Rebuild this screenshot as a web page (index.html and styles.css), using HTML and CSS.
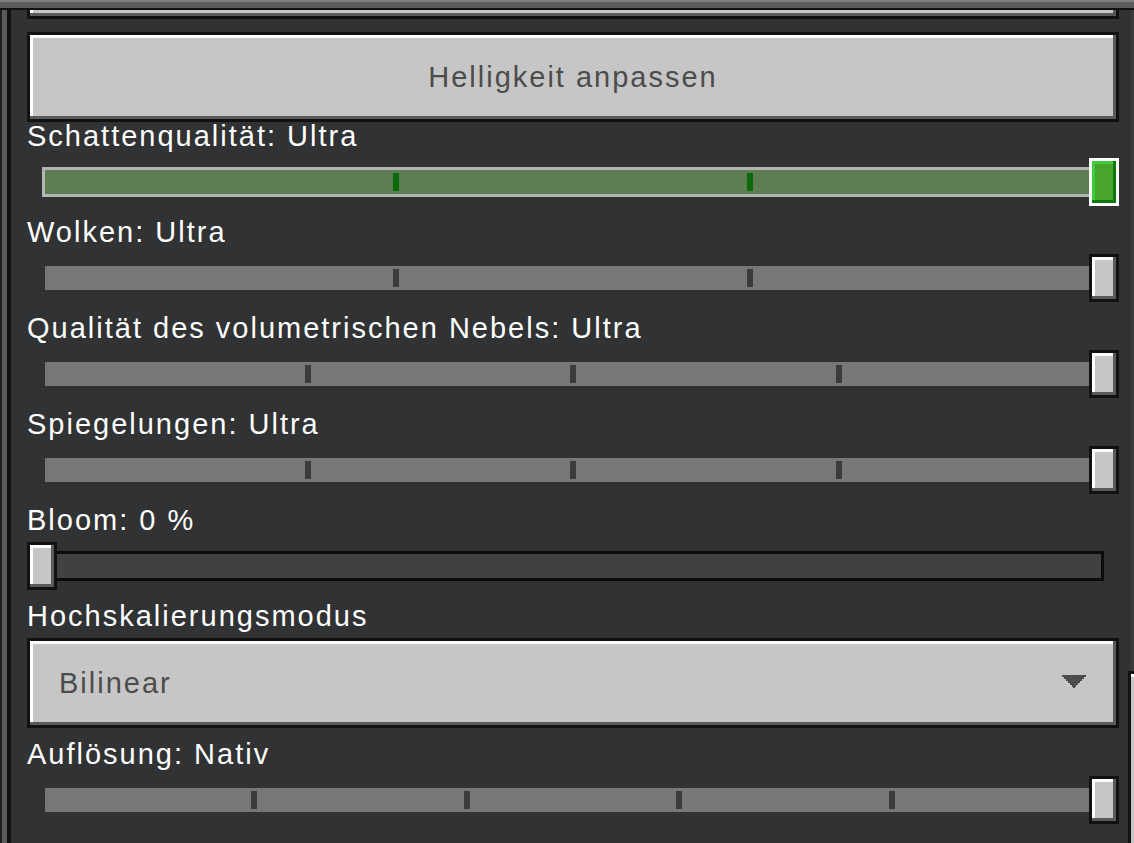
FILE: index.html
```html
<!DOCTYPE html>
<html lang="de">
<head>
<meta charset="utf-8">
<title>Videoeinstellungen</title>
<link rel="stylesheet" href="styles.css">
</head>
<body>
<div class="screen">
  <div class="topbar"></div>
  <div class="main">
    <div class="frame-left"></div>
    <div class="viewport">
      <div class="list">
        <div class="btn partial"></div>
        <div class="btn centered">Helligkeit anpassen</div>

        <div class="label first">Schattenqualität: Ultra</div>
        <div class="slider">
          <div class="track green">
            <span class="tick" style="left: calc(0.33333 * (100% + 6px) - 6px)"></span>
            <span class="tick" style="left: calc(0.66667 * (100% + 6px) - 6px)"></span>
            <span class="thumb green" style="left: calc(1 * (100% + 6px) - 18px)"></span>
          </div>
        </div>

        <div class="label">Wolken: Ultra</div>
        <div class="slider">
          <div class="track">
            <span class="tick" style="left: calc(0.33333 * (100% + 6px) - 6px)"></span>
            <span class="tick" style="left: calc(0.66667 * (100% + 6px) - 6px)"></span>
            <span class="thumb" style="left: calc(1 * (100% + 6px) - 18px)"></span>
          </div>
        </div>

        <div class="label">Qualität des volumetrischen Nebels: Ultra</div>
        <div class="slider">
          <div class="track">
            <span class="tick" style="left: calc(0.25 * (100% + 6px) - 6px)"></span>
            <span class="tick" style="left: calc(0.5 * (100% + 6px) - 6px)"></span>
            <span class="tick" style="left: calc(0.75 * (100% + 6px) - 6px)"></span>
            <span class="thumb" style="left: calc(1 * (100% + 6px) - 18px)"></span>
          </div>
        </div>

        <div class="label">Spiegelungen: Ultra</div>
        <div class="slider">
          <div class="track">
            <span class="tick" style="left: calc(0.25 * (100% + 6px) - 6px)"></span>
            <span class="tick" style="left: calc(0.5 * (100% + 6px) - 6px)"></span>
            <span class="tick" style="left: calc(0.75 * (100% + 6px) - 6px)"></span>
            <span class="thumb" style="left: calc(1 * (100% + 6px) - 18px)"></span>
          </div>
        </div>

        <div class="label">Bloom: 0 %</div>
        <div class="slider">
          <div class="track dark">
            <span class="thumb" style="left: calc(0 * (100% + 6px) - 18px)"></span>
          </div>
        </div>

        <div class="label">Hochskalierungsmodus</div>
        <div class="btn dropdown">
          <span>Bilinear</span>
          <svg class="arrow" width="24" height="13" viewBox="0 0 24 13">
            <path d="M0 0H24V2H22V4H20V6H18V8H16V10H14V12H13V13H11V12H10V10H8V8H6V6H4V4H2V2H0Z" fill="#4c4c4c"/>
          </svg>
        </div>

        <div class="label">Auflösung: Nativ</div>
        <div class="slider">
          <div class="track">
            <span class="tick" style="left: calc(0.2 * (100% + 6px) - 6px)"></span>
            <span class="tick" style="left: calc(0.4 * (100% + 6px) - 6px)"></span>
            <span class="tick" style="left: calc(0.6 * (100% + 6px) - 6px)"></span>
            <span class="tick" style="left: calc(0.8 * (100% + 6px) - 6px)"></span>
            <span class="thumb" style="left: calc(1 * (100% + 6px) - 18px)"></span>
          </div>
        </div>
      </div>
    </div>
    <div class="scrollbar">
      <div class="scroll-thumb"></div>
    </div>
  </div>
</div>
</body>
</html>
```

FILE: styles.css
```css
html, body {
  margin: 0;
  padding: 0;
  background: #313233;
}

.screen {
  width: 1134px;
  height: 843px;
  overflow: hidden;
  display: flex;
  flex-direction: column;
  background: #313233;
  font-family: "Liberation Sans", Arial, sans-serif;
  font-size: 29px;
  letter-spacing: 2px;
}

.topbar {
  flex: 0 0 10px;
  background: linear-gradient(to bottom, #7d7d7d 0 2px, #5b5b5b 2px 8px, #111111 8px 10px);
}

.main {
  flex: 1;
  display: flex;
  min-height: 0;
}

.frame-left {
  flex: 0 0 11px;
  background: linear-gradient(to right, #1e1e1e 0 2px, #5b5b5b 2px 7px, #111111 7px 11px);
}

.viewport {
  flex: 1;
  overflow: hidden;
  padding-left: 16px;
}

.list {
  width: 1092px;
  margin-top: -81px;
  display: flex;
  flex-direction: column;
}

.btn {
  box-sizing: border-box;
  height: 90px;
  border: 3px solid #111111;
  background: #c6c6c6;
  box-shadow: inset -3px -3px 0 #5a5a5a, inset 3px 3px 0 #ffffff;
  color: #4c4c4c;
  display: flex;
  align-items: center;
  flex-shrink: 0;
}

.btn.centered {
  justify-content: center;
  margin-top: 13px;
}

.btn.dropdown {
  justify-content: space-between;
  padding: 0 30px 0 29px;
  margin-bottom: 14px;
}

.arrow {
  display: block;
  margin-top: -4px;
}

.label {
  color: #ffffff;
  line-height: 24px;
  height: 24px;
  margin-bottom: 10px;
  white-space: nowrap;
}

.label.first {
  margin-top: 2px;
}

.slider {
  height: 48px;
  display: flex;
  align-items: center;
  margin-bottom: 14px;
  flex-shrink: 0;
}

.track {
  position: relative;
  box-sizing: border-box;
  width: 1062px;
  height: 30px;
  margin-left: 15px;
  border: 3px solid transparent;
  background: #777777;
  background-clip: padding-box;
}

.track.green {
  border-color: #b4b4b4;
  background: #5d7d52;
}

.track.dark {
  border-color: #0c0c0c;
  background: #414141;
}

.tick {
  position: absolute;
  top: 3px;
  width: 6px;
  height: 18px;
  background: #3b3b3b;
}

.track.green .tick {
  background: #0b6a0b;
}

.thumb {
  position: absolute;
  top: -12px;
  box-sizing: border-box;
  width: 30px;
  height: 48px;
  border: 3px solid #111111;
  background: #c6c6c6;
  box-shadow: inset -3px -3px 0 #5a5a5a, inset 3px 3px 0 #ffffff;
}

.thumb.green {
  border-color: #ffffff;
  background: #48a42a;
  box-shadow: inset -3px -3px 0 #0a7a0a, inset 3px 3px 0 #3ccf3c;
}

.scrollbar {
  flex: 0 0 6px;
  box-sizing: border-box;
  padding-top: 661px;
  display: flex;
  flex-direction: column;
  background: linear-gradient(to right, #313233 0 3px, #3a3b3c 3px 6px);
}

.scroll-thumb {
  flex: 1;
  border-top: 3px solid #111111;
  border-left: 3px solid #111111;
  background: #c6c6c6;
  box-shadow: inset 0 3px 0 #ffffff;
}
```
